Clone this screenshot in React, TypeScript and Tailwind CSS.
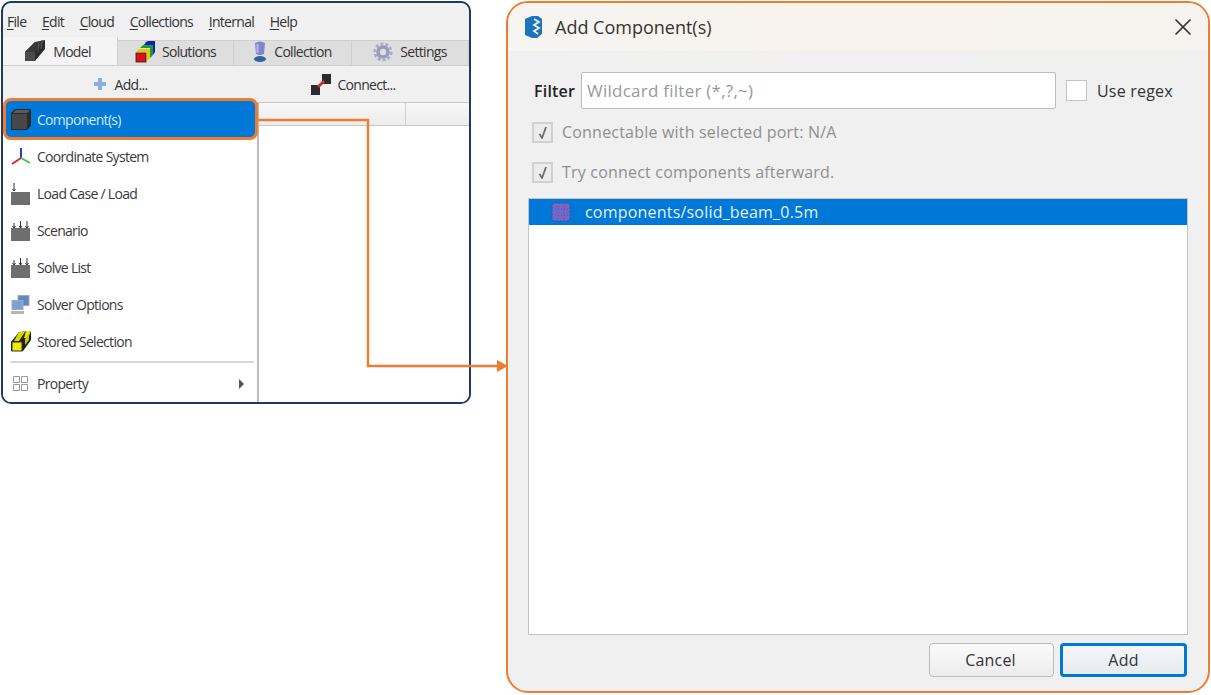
import { X } from "lucide-react";

const font = { fontFamily: '"Open Sans", "Noto Sans", sans-serif' };

function Cube() {
  return (
    <svg width="20" height="23" viewBox="0 0 20 23" className="shrink-0">
      <path d="M0 5 L4 1 H20 V18 L16 22 H0 Z" fill="#2a2a2a" />
      <path d="M1 6 H16 V21 H1 Z" fill="#474747" />
      <path d="M2 5 L5 2 H19 L16 5 Z" fill="#5a5a5a" />
    </svg>
  );
}

function ModelIcon() {
  return (
    <svg width="21" height="22" viewBox="0 0 21 22" className="shrink-0">
      <path d="M0 12 L10 2 L20 0 V9 L10 21 H0 Z" fill="#2b2b2b" />
      <path d="M0 12 H10 V21 H0 Z" fill="#4a4a4a" />
      <path d="M0 12 L10 2 H19 L10 12 Z" fill="#393939" />
      <path d="M14 1 L13 12 M17 0 L16 9" stroke="#555" />
    </svg>
  );
}

function SolutionsIcon() {
  return (
    <svg width="20" height="22" viewBox="0 0 20 22" className="shrink-0">
      <path d="M11 1 L13 0 H20 V11 L18 14 V4 H9 Z" fill="#1b1bbb" />
      <path d="M8 4 H18 V14 L15 17 V7 H5 Z" fill="#14a038" />
      <path d="M4 8 H15 V17 L12 20 V11 H1 Z" fill="#e8c800" />
      <rect x="1" y="12" width="10" height="9" fill="#e01010" stroke="#222" strokeWidth="0.8" />
    </svg>
  );
}

function CollectionIcon() {
  return (
    <svg width="14" height="22" viewBox="0 0 14 22" className="shrink-0">
      <path d="M2 2 Q7 -1 12 2 L11 13 Q7 15 3 13 Z" fill="#8482c8" />
      <path d="M4.5 3 V12" stroke="#b9b8e6" strokeWidth="2" />
      <ellipse cx="7" cy="18" rx="6" ry="3" fill="#2f62a8" />
    </svg>
  );
}

function SettingsIcon() {
  return (
    <svg width="20" height="20" viewBox="0 0 22 22" className="shrink-0">
      <circle cx="11" cy="11" r="5.5" fill="none" stroke="#9a9abc" strokeWidth="4" />
      <circle cx="11" cy="11" r="9" fill="none" stroke="#a9a9c4" strokeWidth="3" strokeDasharray="3.2 2.4" />
    </svg>
  );
}

function PlusIcon() {
  return (
    <svg width="14" height="14" viewBox="0 0 14 14" className="shrink-0">
      <path d="M5 1 H9 V5 H13 V9 H9 V13 H5 V9 H1 V5 H5 Z" fill="#8fb0d4" />
    </svg>
  );
}

function ConnectIcon() {
  return (
    <svg width="22" height="22" viewBox="0 0 22 22" className="shrink-0">
      <rect x="12" y="1" width="9" height="10" fill="#2b2b2b" />
      <rect x="1" y="12" width="9" height="10" fill="#2b2b2b" />
      <path d="M8 14 L14 8" stroke="#d03030" strokeWidth="3" />
    </svg>
  );
}

function AxisIcon() {
  return (
    <svg width="20" height="18" viewBox="0 0 20 18" className="shrink-0">
      <path d="M10 10 V0" stroke="#2020d0" strokeWidth="1.8" />
      <path d="M10 10 L1 16" stroke="#e02020" strokeWidth="1.8" />
      <path d="M10 10 L19 15" stroke="#30d030" strokeWidth="1.8" />
    </svg>
  );
}

function LoadIcon() {
  return (
    <svg width="19" height="22" viewBox="0 0 19 22" className="shrink-0">
      <rect x="0" y="9" width="19" height="13" fill="#6e6e6e" />
      <path d="M3 0 V8 M1.5 6 L3 8 L4.5 6" stroke="#333" fill="none" />
    </svg>
  );
}

function ScenarioIcon() {
  return (
    <svg width="19" height="20" viewBox="0 0 19 20" className="shrink-0">
      <rect x="0" y="7" width="19" height="13" fill="#6e6e6e" />
      <path d="M3 2 V7 M1.5 5 L3 7 L4.5 5 M9.5 0 V7 M8 5 L9.5 7 L11 5 M16 0 V7 M14.5 5 L16 7 L17.5 5" stroke="#333" fill="none" />
    </svg>
  );
}

function SolverIcon() {
  return (
    <svg width="19" height="20" viewBox="0 0 19 20" className="shrink-0">
      <rect x="7" y="0.5" width="11" height="10" fill="#5f86c6" stroke="#a8a8a8" />
      <rect x="1" y="5.5" width="11" height="9" fill="#7ea0d8" stroke="#a8a8a8" />
      <rect x="0" y="16" width="13" height="3" fill="#b5b5b5" />
    </svg>
  );
}

function SelectionIcon() {
  return (
    <svg width="20" height="21" viewBox="0 0 20 21" className="shrink-0">
      <path d="M0 11 L8 1 L20 0 V9 L12 20 H0 Z" fill="#1e1e1e" />
      <path d="M8 1 H14 L8 10 H3 Z" fill="#d8d800" />
      <path d="M15 0 H20 L17 7 H13 Z" fill="#e8e800" />
      <path d="M18 3 V9 L14 14 V8 Z" fill="#c8c800" />
      <rect x="1" y="11" width="10" height="9" fill="#eded00" stroke="#333" />
    </svg>
  );
}

function PropertyIcon() {
  return (
    <svg width="15" height="15" viewBox="0 0 15 15" className="shrink-0">
      <path d="M0.5 0.5 H6.5 V6.5 H0.5 Z M8.5 0.5 H14.5 V6.5 H8.5 Z M0.5 8.5 H6.5 V14.5 H0.5 Z M8.5 8.5 H14.5 V14.5 H8.5 Z" fill="none" stroke="#999" />
    </svg>
  );
}

function BeamIcon() {
  return (
    <svg width="20" height="20" viewBox="0 0 20 20" className="shrink-0">
      <rect x="1" y="1" width="18" height="18" rx="3" fill="#7168c8" stroke="#4c4496" strokeDasharray="2 1.5" />
      <path d="M1 7 H19 M1 13 H19 M7 1 V19 M13 1 V19" stroke="#5a52aa" strokeDasharray="1 2" />
    </svg>
  );
}

function AppLogo() {
  return (
    <svg width="19" height="22" viewBox="0 0 19 22" className="shrink-0">
      <path d="M1 3 L8 0 H14 L18 3 V18 L13 22 H8 L1 19 Z" fill="#1c75bc" />
      <path d="M10 3 L15 6 L10 9 L15 12 L10 15 L14 18" stroke="#e6f1fa" strokeWidth="1.8" fill="none" />
    </svg>
  );
}

function Underlined({ first, rest }: { first: string; rest: string }) {
  return (
    <span>
      <span className="underline underline-offset-2">{first}</span>
      {rest}
    </span>
  );
}

function Tab({ icon, label, active, className }: { icon: React.ReactNode; label: string; active?: boolean; className: string }) {
  return (
    <div className={`flex items-center justify-center gap-[7px] border-r border-[#cfcfcf] ${className} ${active ? "h-[28px] bg-[#f4f4f4] pr-[4px]" : "h-[25px] border-t bg-[#dedede] pb-[3px]"}`}>
      {icon}
      <span>{label}</span>
    </div>
  );
}

function MenuItem({ icon, label }: { icon: React.ReactNode; label: string }) {
  return (
    <div className="flex h-[37px] items-center text-[#3a3a3a]">
      <div className="flex w-[34px] justify-center pl-[1px]">{icon}</div>
      <span>{label}</span>
    </div>
  );
}

function DisabledCheck({ label }: { label: string }) {
  return (
    <div className="flex items-center gap-[9px] text-[#8f8f8f]">
      <div className="flex h-[21px] w-[21px] items-center justify-center border-2 border-[#d0d0d0] bg-[#ececec]">
        <svg width="10" height="13" viewBox="0 0 10 13">
          <path d="M1.5 8 L4 12 L8 1" fill="none" stroke="#6e6e6e" strokeWidth="1.8" />
        </svg>
      </div>
      <span>{label}</span>
    </div>
  );
}

export default function App() {
  return (
    <div className="relative flex h-[695px] w-[1211px] items-start gap-[35px] overflow-hidden bg-white pl-[1px] pt-[1px] text-[14px]" style={font}>
      {/* model panel */}
      <div className="h-[403px] w-[470px] shrink-0 overflow-hidden rounded-[10px] border-2 border-[#1f3864] bg-[#f0f0f0] text-[14px] tracking-[-0.7px] text-[#333]">
        <div className="flex h-[35px] items-center gap-[15.6px] pl-[4px] pt-[2px]">
          <Underlined first="F" rest="ile" />
          <Underlined first="E" rest="dit" />
          <Underlined first="C" rest="loud" />
          <Underlined first="C" rest="ollections" />
          <Underlined first="I" rest="nternal" />
          <Underlined first="H" rest="elp" />
        </div>
        <div className="flex h-[28px] items-end border-b border-[#cfcfcf]">
          <Tab active className="w-[115px]" icon={<ModelIcon />} label="Model" />
          <Tab className="w-[116px]" icon={<SolutionsIcon />} label="Solutions" />
          <Tab className="w-[118px]" icon={<CollectionIcon />} label="Collection" />
          <Tab className="flex-1" icon={<SettingsIcon />} label="Settings" />
        </div>
        <div className="flex h-[37px] items-center border-b border-[#c8c8c8]">
          <div className="flex w-[234px] items-center justify-center gap-[8px]">
            <PlusIcon />
            <span>Add...</span>
          </div>
          <div className="flex flex-1 items-center justify-center gap-[5px]">
            <ConnectIcon />
            <span>Connect...</span>
          </div>
        </div>
        <div className="flex h-[300px]">
          <div className="relative w-[256px] shrink-0 border-r-2 border-[#bdbdbd] bg-white">
            <div className="absolute -top-[5px] left-0 flex h-[42px] w-[255px] items-center rounded-[8px] border-[3px] border-[#ed7d31] bg-[#0078d7] text-[#d5e8f8]">
              <div className="flex w-[31px] justify-center pr-[1px]"><Cube /></div>
              <span>Component(s)</span>
            </div>
            <div className="pt-[35px]">
              <MenuItem icon={<AxisIcon />} label="Coordinate System" />
              <MenuItem icon={<LoadIcon />} label="Load Case / Load" />
              <MenuItem icon={<ScenarioIcon />} label="Scenario" />
              <MenuItem icon={<ScenarioIcon />} label="Solve List" />
              <MenuItem icon={<SolverIcon />} label="Solver Options" />
              <MenuItem icon={<SelectionIcon />} label="Stored Selection" />
            </div>
            <div className="ml-[7px] mr-[3px] mt-[1px] h-[2px] bg-[#d8d8d8]" />
            <div className="flex h-[41px] items-center justify-between pr-[13px] text-[#3a3a3a]">
              <div className="flex items-center">
                <div className="flex w-[34px] justify-center"><PropertyIcon /></div>
                <span>Property</span>
              </div>
              <svg width="5" height="10" viewBox="0 0 5 10"><path d="M0 0 L5 5 L0 10 Z" fill="#555" /></svg>
            </div>
          </div>
          <div className="flex-1 bg-white">
            <div className="flex h-[23px] border-b border-[#c8c8c8] bg-gradient-to-b from-[#f8f8f8] to-[#ececec]">
              <div className="w-[147px] border-r border-[#cfcfcf]" />
            </div>
          </div>
        </div>
      </div>

      {/* add component dialog */}
      <div className="flex h-[692px] w-[704px] shrink-0 flex-col overflow-hidden rounded-[22px] border-2 border-[#ed7d31] bg-[#f0f0f0] text-[16px] tracking-[0.2px]">
        <div className="flex h-[48px] items-center bg-gradient-to-r from-[#f6f5f2] via-[#f8f2ec] to-[#f5f3ef] pl-[16px] pr-[11px]">
          <AppLogo />
          <span className="ml-[12px] text-[18px] tracking-normal text-[#333]">Add Component(s)</span>
          <X className="ml-auto text-[#333]" size={28} strokeWidth={1.5} />
        </div>
        <div className="flex flex-1 flex-col px-[20px]">
          <div className="mt-[21px] flex h-[37px] items-center">
            <span className="ml-[6px] w-[47px] font-semibold text-[#222]">Filter</span>
            <div className="flex h-full w-[475px] items-center rounded-[2px] border border-[#bcbcbc] bg-white pl-[5px] text-[17px] tracking-[0.25px] text-[#999]">Wildcard filter (*,?,~)</div>
            <div className="ml-[10px] h-[21px] w-[21px] border border-[#c4c4c4] bg-white" />
            <span className="ml-[10px] font-medium text-[#333]">Use regex</span>
          </div>
          <div className="ml-[4px] mt-[11px]"><DisabledCheck label="Connectable with selected port: N/A" /></div>
          <div className="ml-[4px] mt-[16px]"><DisabledCheck label="Try connect components afterward." /></div>
          <div className="mt-[14px] h-[437px] w-[660px] border border-[#c4c4c4] bg-white">
            <div className="flex h-[26px] items-center bg-[#0078d7] pl-[22px] text-[#e4f1fb]">
              <BeamIcon />
              <span className="ml-[14px]">components/solid_beam_0.5m</span>
            </div>
          </div>
          <div className="mt-[8px] flex justify-end gap-[6px] pr-[1px] text-[#333]">
            <div className="flex h-[34px] w-[125px] items-center justify-center rounded-[4px] border border-[#bcbcbc] bg-gradient-to-b from-[#fbfbfb] to-[#ececec] pr-[2px]">Cancel</div>
            <div className="flex h-[34px] w-[127px] items-center justify-center rounded-[4px] border-[3px] border-[#0078d7] bg-gradient-to-b from-[#f5f6f8] to-[#e6ebf1]">Add</div>
          </div>
        </div>
      </div>

      {/* connector from menu item to dialog */}
      <svg className="absolute left-0 top-0" width="1211" height="695" fill="none">
        <path d="M257 120 H368 V366 H498" stroke="#ed7d31" strokeWidth="2.4" />
        <path d="M497 360 L508 366 L497 372 Z" fill="#ed7d31" />
      </svg>
    </div>
  );
}
